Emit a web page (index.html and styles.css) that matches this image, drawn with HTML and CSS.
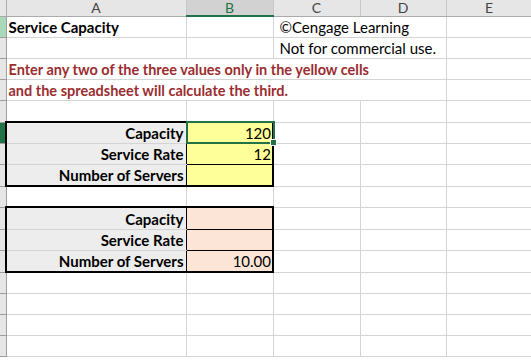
FILE: index.html
```html
<!DOCTYPE html>
<html lang="en">
<head>
<meta charset="UTF-8">
<title>Service Capacity</title>
<link rel="stylesheet" href="styles.css">
</head>
<body>
<div class="sheet">
    <table class="grid">
        <colgroup>
            <col class="col-rh">
            <col class="col-a">
            <col class="col-b">
            <col class="col-c">
            <col class="col-d">
            <col class="col-e">
        </colgroup>
        <thead>
            <tr class="head-row">
                <th class="corner"></th>
                <th>A</th>
                <th class="head-sel">B</th>
                <th>C</th>
                <th>D</th>
                <th>E</th>
            </tr>
        </thead>
        <tbody>
            <tr class="r21">
                <th class="rh rh-light"></th>
                <td class="bold">Service Capacity</td>
                <td></td>
                <td colspan="2" class="credit">©Cengage Learning</td>
                <td></td>
            </tr>
            <tr class="r21">
                <th class="rh"></th>
                <td></td>
                <td></td>
                <td colspan="2" class="credit">Not for commercial use.</td>
                <td></td>
            </tr>
            <tr class="r21">
                <th class="rh"></th>
                <td colspan="4" class="bold note">Enter any two of the three values only in the yellow cells</td>
                <td></td>
            </tr>
            <tr class="r21">
                <th class="rh"></th>
                <td colspan="4" class="bold note">and the spreadsheet will calculate the third.</td>
                <td></td>
            </tr>
            <tr class="r22">
                <th class="rh"></th>
                <td></td><td></td><td></td><td></td><td></td>
            </tr>

            <tr class="r21">
                <th class="rh rh-sel"></th>
                <td class="label box-top">Capacity</td>
                <td class="num input box-top selected">120<span class="sel-frame"></span></td>
                <td></td><td></td><td></td>
            </tr>
            <tr class="r21">
                <th class="rh"></th>
                <td class="label">Service Rate</td>
                <td class="num input">12</td>
                <td></td><td></td><td></td>
            </tr>
            <tr class="r22">
                <th class="rh"></th>
                <td class="label box-bottom">Number of Servers</td>
                <td class="num input box-bottom"></td>
                <td></td><td></td><td></td>
            </tr>
            <tr class="r21">
                <th class="rh"></th>
                <td></td><td></td><td></td><td></td><td></td>
            </tr>

            <tr class="r22">
                <th class="rh"></th>
                <td class="label box-top">Capacity</td>
                <td class="num output box-top"></td>
                <td></td><td></td><td></td>
            </tr>
            <tr class="r21">
                <th class="rh"></th>
                <td class="label">Service Rate</td>
                <td class="num output"></td>
                <td></td><td></td><td></td>
            </tr>
            <tr class="r22">
                <th class="rh"></th>
                <td class="label box-bottom">Number of Servers</td>
                <td class="num output box-bottom">10.00</td>
                <td></td><td></td><td></td>
            </tr>

            <tr class="r21"><th class="rh"></th><td></td><td></td><td></td><td></td><td></td></tr>
            <tr class="r21"><th class="rh"></th><td></td><td></td><td></td><td></td><td></td></tr>
            <tr class="r21"><th class="rh"></th><td></td><td></td><td></td><td></td><td></td></tr>
            <tr class="r21"><th class="rh"></th><td></td><td></td><td></td><td></td><td></td></tr>
        </tbody>
    </table>
</div>
</body>
</html>
```

FILE: styles.css
```css
body {
    margin: 0;
    padding: 0;
    background: #fff;
    overflow: hidden;
    font-family: Lato, "Liberation Sans", sans-serif;
    font-size: 15px;
    color: #000;
}

.sheet {
    width: 531px;
    height: 364px;
    overflow: hidden;
}

.grid {
    border-collapse: collapse;
    table-layout: fixed;
    width: 532px;
}

.col-rh { width: 6px; }
.col-a { width: 180px; }
.col-b { width: 87px; }
.col-c { width: 87px; }
.col-d { width: 86px; }
.col-e { width: 86px; }

/* column headers */
.head-row th {
    height: 15px;
    padding: 0;
    background: #e6e6e6;
    border-right: 1px solid #c8c8c8;
    border-bottom: 1px solid #ababab;
    font-weight: normal;
    color: #444;
    font-size: 14px;
    line-height: 15px;
    text-align: center;
}

.head-row .head-sel {
    background: #d2d2d2;
    color: #217346;
    border-bottom: 2px solid #217346;
}

.head-row .corner {
    border-right: 1px solid #ababab;
}

/* row headers */
.rh {
    padding: 0;
    background: #e6e6e6;
    border-right: 1px solid #9e9e9e;
    border-bottom: 1px solid #9e9e9e;
}

.rh-light {
    background: #a9d8bb;
}

.rh-sel {
    background: #217346;
}

.r21 { height: 21px; }
.r22 { height: 22px; }

td {
    padding: 0 2px 0 2px;
    border-right: 1px solid #d4d4d4;
    border-bottom: 1px solid #d4d4d4;
    white-space: nowrap;
    vertical-align: bottom;
    line-height: 19px;
}

.bold {
    font-weight: bold;
}

.credit {
    padding-left: 6px;
}

.note {
    color: #9b2d30;
    font-size: 14.5px;
}

.label {
    background: #ededed;
    font-weight: bold;
    text-align: right;
    border-left: 2px solid #000;
    border-right: 1px solid #000;
}

.num {
    text-align: right;
    padding-right: 1px;
    border-right: 2px solid #000;
    border-bottom: 1px solid #000;
}

.input {
    background: #ffff99;
}

.output {
    background: #fce4d6;
}

.box-top {
    border-top: 2px solid #000;
}

.box-bottom {
    border-bottom: 2px solid #000;
}

.selected {
    position: relative;
}

.sel-frame {
    position: absolute;
    left: -1px;
    top: -2px;
    right: -3px;
    bottom: -1px;
    border: 2px solid #217346;
}

.sel-frame::after {
    content: "";
    position: absolute;
    right: -4px;
    bottom: -4px;
    width: 5px;
    height: 5px;
    background: #217346;
    border: 1px solid #fff;
}
```
